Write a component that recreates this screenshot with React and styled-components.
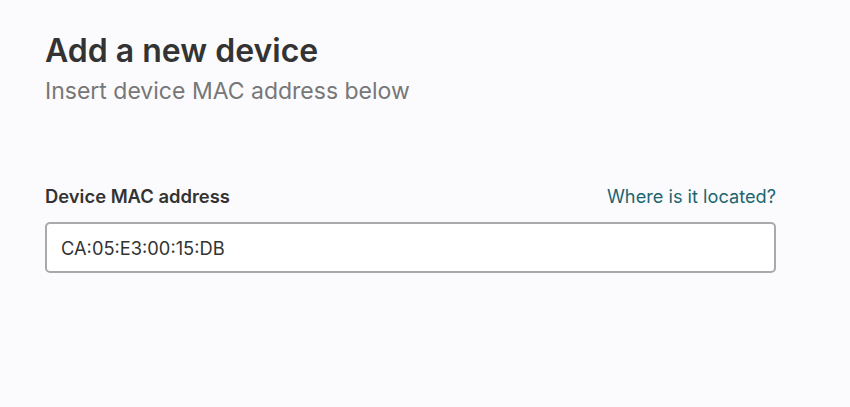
import React, { useState } from "react";
import styled, { createGlobalStyle } from "styled-components";

const GlobalStyle = createGlobalStyle`
    html, body {
        margin: 0;
        padding: 0;
        background-color: #fbfbfd;
    }
    body {
        font-family: Inter, "Noto Sans", sans-serif;
    }
`;

const Page = styled.div`
    width: 850px;
    height: 407px;
    box-sizing: border-box;
    padding: 31px 74px 0 45px;
`;

const Header = styled.div`
    display: flex;
    flex-direction: column;
    gap: 6px;
`;

const Title = styled.h1`
    margin: 0;
    font-size: 32px;
    line-height: 40px;
    font-weight: 600;
    color: #333333;
`;

const Subtitle = styled.p`
    margin: 0;
    font-size: 23px;
    line-height: 28px;
    font-weight: 400;
    color: #777777;
`;

const Field = styled.div`
    margin-top: 80px;
    display: flex;
    flex-direction: column;
    gap: 15px;
`;

const LabelRow = styled.div`
    display: flex;
    justify-content: space-between;
    align-items: baseline;
`;

const Label = styled.label`
    font-size: 18.4px;
    line-height: 22px;
    font-weight: 600;
    color: #333333;
`;

const HelpLink = styled.a`
    font-size: 18.2px;
    line-height: 22px;
    color: #1c6670;
    text-decoration: none;
    cursor: pointer;
`;

const MacInput = styled.input`
    box-sizing: border-box;
    width: 100%;
    height: 51px;
    padding: 0 14px;
    border: 2px solid #a9a9ab;
    border-radius: 5px;
    background-color: #ffffff;
    font-family: Inter, "Noto Sans", sans-serif;
    font-size: 18.3px;
    color: #333333;
    outline: none;
`;

const App = () => {
    const [mac, setMac] = useState("CA:05:E3:00:15:DB");
    return (
        <Page>
            <GlobalStyle />
            <Header>
                <Title>Add a new device</Title>
                <Subtitle>Insert device MAC address below</Subtitle>
            </Header>
            <Field>
                <LabelRow>
                    <Label htmlFor="mac">Device MAC address</Label>
                    <HelpLink>Where is it located?</HelpLink>
                </LabelRow>
                <MacInput id="mac" value={mac} onChange={(e) => setMac(e.target.value)} />
            </Field>
        </Page>
    );
};

export default App;
